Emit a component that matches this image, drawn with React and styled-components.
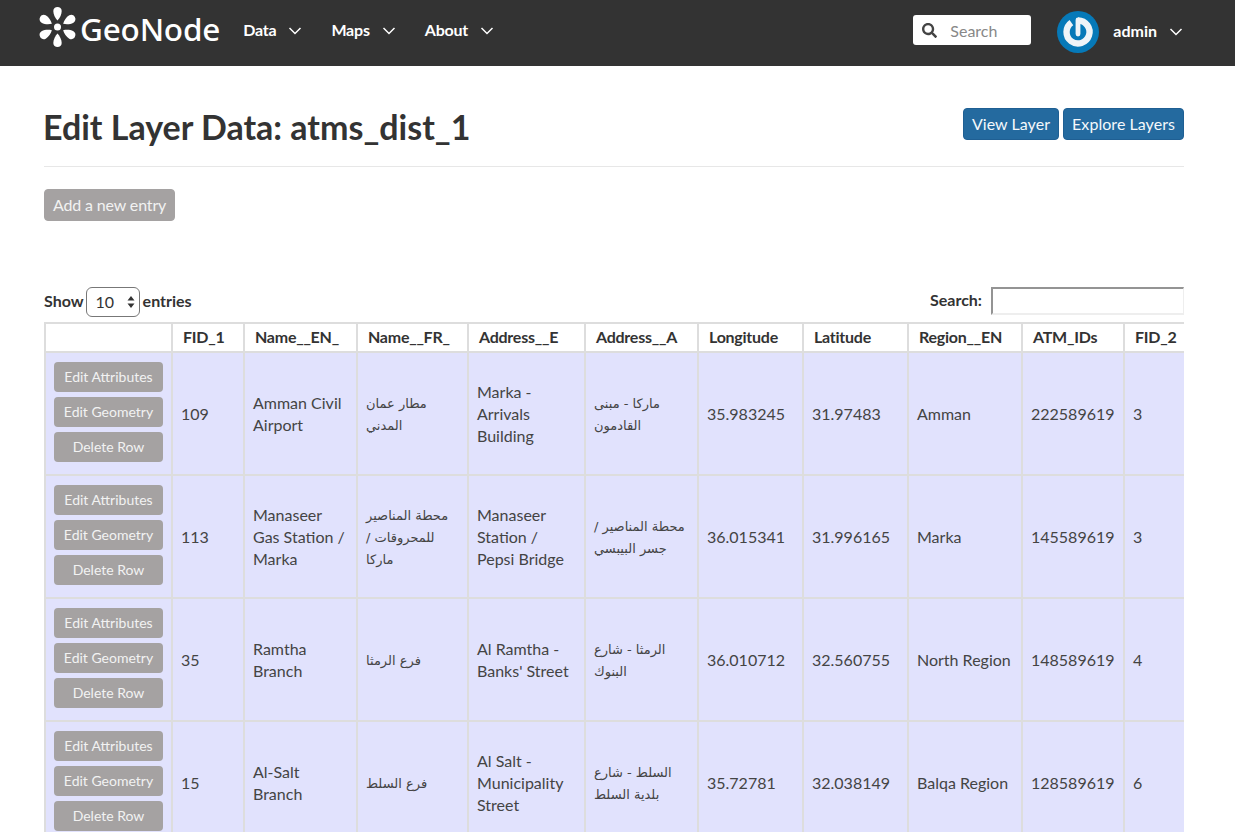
import React from 'react'
import styled, { createGlobalStyle } from 'styled-components'
import { FaSearch } from 'react-icons/fa'

const GlobalStyle = createGlobalStyle`
  html, body {
    margin: 0;
    height: 100%;
    overflow: hidden;
    background: #fff;
    color: #333;
    font-family: Lato, "Noto Sans", "DejaVu Sans", sans-serif;
    font-size: 16px;
  }
`

const TopBar = styled.header`
  height: 66px;
  background: #333;
  display: flex;
  align-items: center;
  padding: 0 52px 8px 38px;
  box-sizing: border-box;
`
const Brand = styled.div`
  display: flex;
  align-items: center;
  color: #fff;
  margin-right: 23px;
`
const BrandName = styled.span`
  font-family: "Noto Sans", sans-serif;
  font-size: 31.5px;
  font-weight: 500;
  line-height: 40px;
  margin-left: 2px;
  letter-spacing: -0.2px;
`
const NavLink = styled.a`
  display: flex;
  align-items: center;
  gap: 12px;
  margin-right: 29px;
  color: #fff;
  font-weight: 700;
  font-size: 16px;
  letter-spacing: -0.2px;
`
const Spacer = styled.div`
  flex: 1;
`
const SearchBox = styled.div`
  width: 118px;
  height: 30px;
  margin: 2px 26px 0 0;
  background: #fff;
  border-radius: 3px;
  display: flex;
  align-items: center;
  gap: 13px;
  padding-left: 9px;
  box-sizing: border-box;
  color: #888;
  font-size: 16px;
  svg { color: #444; }
`
const UserMenu = styled.div`
  display: flex;
  align-items: center;
  color: #fff;
  font-weight: 700;
  font-size: 16px;
  gap: 14px;
  margin-top: 6px;
`
const UserName = styled.div`
  display: flex;
  align-items: center;
  gap: 12px;
  margin-bottom: 4px;
`
const Main = styled.main`
  padding: 0 51px 0 44px;
`
const TitleRow = styled.div`
  display: flex;
  justify-content: space-between;
  align-items: flex-start;
  height: 101px;
  padding-top: 41px;
  box-sizing: border-box;
  border-bottom: 1px solid #e7e7e7;
`
const Title = styled.h1`
  margin: 0 0 0 -1px;
  font-size: 34px;
  line-height: 40px;
  font-weight: 700;
  color: #333;
`
const Actions = styled.div`
  display: flex;
  gap: 4px;
  margin-top: 1px;
`
const Button = styled.button`
  height: 32px;
  padding: 0 8px 2px;
  border: 1px solid ${(p) => (p.$primary ? '#1f5f93' : '#a5a2a2')};
  border-radius: 4px;
  background: ${(p) => (p.$primary ? '#246a9f' : '#a5a2a2')};
  color: ${(p) => (p.$primary ? '#f4f8fb' : '#f2f2f2')};
  font-family: Lato, sans-serif;
  font-size: 16px;
  letter-spacing: ${(p) => (p.$primary ? '0.05px' : '-0.15px')};
`
const AddRow = styled.div`
  margin-top: 22px;
  height: 98px;
`
const TableControls = styled.div`
  display: flex;
  justify-content: space-between;
  align-items: flex-start;
  height: 32px;
  font-weight: 700;
  font-size: 16px;
`
const ShowEntries = styled.label`
  display: flex;
  align-items: flex-start;
  line-height: 28px;
`
const PageSize = styled.span`
  width: 54px;
  height: 30px;
  margin: 0 3px 0 2px;
  border: 1px solid #777;
  border-radius: 6px;
  box-sizing: border-box;
  display: flex;
  align-items: center;
  justify-content: space-between;
  padding: 0 4px 0 9px;
  font-weight: 400;
`
const SearchLabel = styled.label`
  display: flex;
  align-items: flex-start;
  gap: 9px;
  line-height: 26px;
`
const SearchField = styled.input`
  width: 193px;
  height: 28px;
  box-sizing: border-box;
  border-style: solid;
  border-width: 2px 1px 2px 2px;
  border-color: #949494 #eee #eee #949494;
  padding: 0;
  background: #fff;
`
const TableClip = styled.div`
  width: 1140px;
  overflow: hidden;
  margin-top: 3px;
`
const Table = styled.table`
  border-collapse: collapse;
  table-layout: fixed;
  width: 1200px;
`
const Col = styled.col`
  width: ${(p) => p.$width}px;
`
const HeadCell = styled.th`
  height: 25px;
  padding: 0 10px 2px;
  border: 2px solid #ddd;
  border-bottom: 1px solid #111;
  text-align: left;
  font-size: 16px;
  font-weight: 700;
  letter-spacing: -0.25px;
  color: #333;
  white-space: nowrap;
  overflow: hidden;
`
const DataRow = styled.tr`
  background: #e1e2fd;
`
const Cell = styled.td`
  height: 121px;
  padding: 0 8px;
  border: 2px solid #ddd;
  font-size: 16px;
  line-height: 22px;
  color: #444;
  vertical-align: middle;
`
const ArabicText = styled.div`
  font-family: "DejaVu Sans", "Noto Sans", sans-serif;
  font-size: 13px;
  line-height: 22px;
  text-align: left;
  padding-top: 2px;
`
const RowActions = styled.div`
  display: flex;
  flex-direction: column;
  gap: 5px;
  padding-bottom: 4px;
`
const RowButton = styled.button`
  height: 30px;
  border: 0;
  border-radius: 4px;
  background: #a5a2a2;
  color: #f2f2f2;
  font-family: Lato, sans-serif;
  font-size: 14px;
  padding: 0;
`
const ChevronIcon = styled.svg`
  margin-top: 3px;
`

const petal = 'M19.5 13.5 C17.2 11 15.3 7.5 15.3 4 C15.3 1.5 17.2 0 19.5 0 C21.8 0 23.7 1.5 23.7 4 C23.7 7.5 21.8 11 19.5 13.5Z'

const LogoMark = () => (
  <svg width="40" height="44" viewBox="0 0 40 44" fill="#fff">
    <circle cx="19.5" cy="20" r="3.5" />
    {[0, 60, 120, 180, 240, 300].map((a) => (
      <path key={a} d={petal} transform={`rotate(${a} 19.5 20)`} />
    ))}
  </svg>
)

const Chevron = () => (
  <ChevronIcon width="14" height="8" viewBox="0 0 14 8" fill="none" stroke="#fff" strokeWidth="1.5">
    <path d="M1.5 1 L7 6.5 L12.5 1" />
  </ChevronIcon>
)

const Avatar = () => (
  <svg width="42" height="42" viewBox="0 0 42 42" fill="none">
    <circle cx="21" cy="21" r="21" fill="#0679b8" />
    <path d="M21 9.5 A11.5 11.5 0 1 1 14.4 11.6" stroke="#eef4f8" strokeWidth="6.4" />
    <path d="M21 9 V23" stroke="#eef4f8" strokeWidth="4.8" strokeLinecap="round" />
  </svg>
)

const SelectArrows = () => (
  <svg width="8" height="14" viewBox="0 0 8 14" fill="#333">
    <path d="M4 1 L7.5 5.5 H0.5 Z M4 13 L0.5 8.5 H7.5 Z" />
  </svg>
)

const columns = [
  { label: '', width: 127 },
  { label: 'FID_1', width: 72 },
  { label: 'Name__EN_', width: 113 },
  { label: 'Name__FR_', width: 111 },
  { label: 'Address__E', width: 117 },
  { label: 'Address__A', width: 113 },
  { label: 'Longitude', width: 105 },
  { label: 'Latitude', width: 105 },
  { label: 'Region__EN', width: 114 },
  { label: 'ATM_IDs', width: 102 },
  { label: 'FID_2', width: 121 },
]

const rows = [
  ['109', 'Amman Civil Airport', 'مطار عمان المدني', 'Marka - Arrivals Building', 'ماركا - مبنى القادمون', '35.983245', '31.97483', 'Amman', '222589619', '3'],
  ['113', 'Manaseer Gas Station / Marka', 'محطة المناصير للمحروقات / ماركا', 'Manaseer Station / Pepsi Bridge', 'محطة المناصير / جسر البيبسي', '36.015341', '31.996165', 'Marka', '145589619', '3'],
  ['35', 'Ramtha Branch', 'فرع الرمثا', "Al Ramtha - Banks' Street", 'الرمثا - شارع البنوك', '36.010712', '32.560755', 'North Region', '148589619', '4'],
  ['15', 'Al-Salt Branch', 'فرع السلط', 'Al Salt - Municipality Street', 'السلط - شارع بلدية السلط', '35.72781', '32.038149', 'Balqa Region', '128589619', '6'],
]

const App = () => (
  <>
    <GlobalStyle />
    <TopBar>
      <Brand>
        <LogoMark />
        <BrandName>GeoNode</BrandName>
      </Brand>
      <NavLink>Data <Chevron /></NavLink>
      <NavLink>Maps <Chevron /></NavLink>
      <NavLink>About <Chevron /></NavLink>
      <Spacer />
      <SearchBox><FaSearch size={15} /> Search</SearchBox>
      <UserMenu>
        <Avatar />
        <UserName>admin <Chevron /></UserName>
      </UserMenu>
    </TopBar>
    <Main>
      <TitleRow>
        <Title>Edit Layer Data: atms_dist_1</Title>
        <Actions>
          <Button $primary>View Layer</Button>
          <Button $primary>Explore Layers</Button>
        </Actions>
      </TitleRow>
      <AddRow><Button>Add a new entry</Button></AddRow>
      <TableControls>
        <ShowEntries>Show <PageSize>10 <SelectArrows /></PageSize> entries</ShowEntries>
        <SearchLabel>Search: <SearchField /></SearchLabel>
      </TableControls>
      <TableClip>
        <Table>
          <colgroup>
            {columns.map((c) => <Col key={c.label} $width={c.width} />)}
          </colgroup>
          <thead>
            <tr>{columns.map((c) => <HeadCell key={c.label}>{c.label}</HeadCell>)}</tr>
          </thead>
          <tbody>
            {rows.map((r) => (
              <DataRow key={r[0]}>
                <Cell>
                  <RowActions>
                    <RowButton>Edit Attributes</RowButton>
                    <RowButton>Edit Geometry</RowButton>
                    <RowButton>Delete Row</RowButton>
                  </RowActions>
                </Cell>
                {r.map((v, i) => (
                  <Cell key={i}>
                    {i === 2 || i === 4 ? <ArabicText>{v}</ArabicText> : v}
                  </Cell>
                ))}
              </DataRow>
            ))}
          </tbody>
        </Table>
      </TableClip>
    </Main>
  </>
)

export default App
